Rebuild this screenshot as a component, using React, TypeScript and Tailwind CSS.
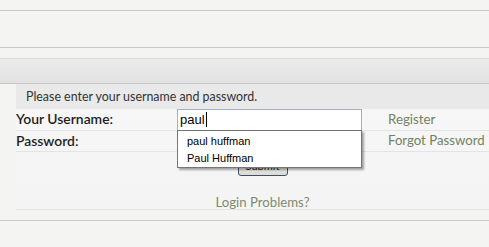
export default function App() {
    return (
        <div className="w-[489px] h-[247px] overflow-hidden bg-[#f4f4f2] font-['Lato',sans-serif] text-[#1e1e1e]">
            <div className="h-[11px] border-b border-[#c9c9c7]" />
            <div className="h-[37px] border-b border-[#c9c9c7]" />
            <div className="mt-[10px] h-[26px] border-t border-[#dadad8] border-b border-b-[#c6c6c4] bg-gradient-to-b from-[#ebebeb] to-[#e2e2e2]" />

            <div className="ml-[16px] bg-gradient-to-b from-[#f7f7f7] to-[#f4f4f4]">
                <div className="h-[25px] bg-[#e9e9e9] pl-[10px] pt-[2px] flex items-center text-[12.4px] text-[#333]">
                    Please enter your username and password.
                </div>

                <div className="h-[22px] flex items-center border-b border-[#e4e4e4]">
                    <div className="w-[161px] text-[13.9px] font-semibold">Your Username:</div>
                    <div className="relative w-[185px]">
                        <div className="h-[22px] border border-[#a3b3c3] bg-white flex items-center pl-[2px] font-['Liberation_Sans',sans-serif] text-[13px] text-black">
                            paul<span className="w-px h-[15px] bg-black ml-[1px]" />
                        </div>
                        <div className="absolute left-0 top-[21px] w-[185px] h-[38px] bg-white border border-[#767676] shadow-[2px_2px_2px_rgba(0,0,0,0.35)] z-10 font-['Liberation_Sans',sans-serif] text-[11px] text-black pl-[9px] pt-[2px] leading-[17px]">
                            <div>paul huffman</div>
                            <div>Paul Huffman</div>
                        </div>
                    </div>
                    <a className="ml-[26px] text-[13.3px] text-[#728262]">Register</a>
                </div>

                <div className="h-[21px] flex items-center border-b border-[#e4e4e4]">
                    <div className="w-[161px] text-[13.9px] font-semibold">Password:</div>
                    <div className="w-[185px]" />
                    <a className="ml-[26px] text-[13.2px] text-[#728262]">Forgot Password</a>
                </div>

                <div className="flex justify-center pl-[20px] pt-[5px]">
                    <button className="w-[50px] h-[19px] border border-[#3d5068] rounded-[3px] bg-gradient-to-b from-[#f4f4f0] to-[#dcdcd4] text-[11px]">
                        Submit
                    </button>
                </div>

                <div className="h-[34px] flex items-end justify-center pl-[20px] border-b border-[#e4e4e4] text-[13.2px] leading-[13px] text-[#7d8b6f]">
                    Login Problems?
                </div>
            </div>
            <div className="mt-[10px] border-b border-[#c9c9c7]" />
        </div>
    )
}
